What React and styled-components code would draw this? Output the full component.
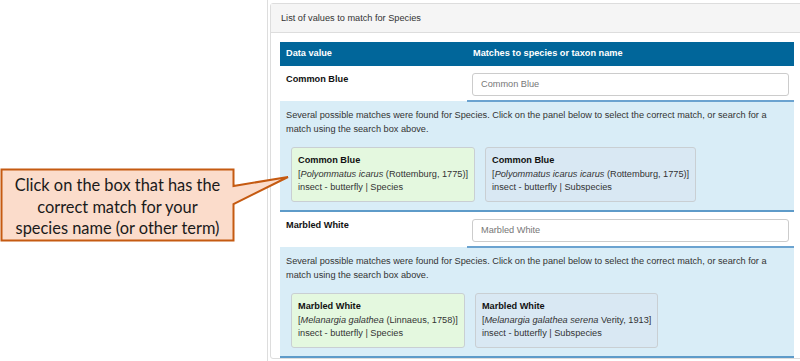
import React from 'react';
import styled, { createGlobalStyle } from 'styled-components';

const GlobalStyle = createGlobalStyle`
  html, body {
    margin: 0;
    padding: 0;
    background: #fff;
    overflow: hidden;
  }
  body {
    font-family: "Liberation Sans", Arial, sans-serif;
    font-size: 9.2px;
    line-height: 13.6px;
    color: #333;
  }
`;

const Page = styled.div`
  display: flex;
  width: 800px;
  height: 361px;
  overflow: hidden;
`;

const LeftCol = styled.div`
  width: 267px;
  flex: none;
  padding-top: 168px;
  position: relative;
  z-index: 2;
`;

const Callout = styled.div`
  position: relative;
  width: 235px;
  height: 75px;
  display: flex;
  align-items: center;
  justify-content: center;
`;

const CalloutShape = styled.svg`
  position: absolute;
  left: 0;
  top: 0;
  overflow: visible;
`;

const CalloutText = styled.div`
  position: relative;
  font-family: Lato, "Open Sans", sans-serif;
  font-size: 16.4px;
  line-height: 21.5px;
  color: #1a1a1a;
  text-align: center;
  padding-top: 2px;
  white-space: nowrap;
`;

const RightCol = styled.div`
  flex: 1;
  border-left: 1px solid #ddd;
  padding: 3px 0 0 2px;
`;

const Panel = styled.div`
  width: 533px;
  border: 1px solid #ddd;
  border-radius: 3px;
  background: #fff;
`;

const PanelHeading = styled.div`
  height: 28px;
  line-height: 28px;
  padding: 0 10px;
  background: #f5f5f5;
  border-bottom: 1px solid #ddd;
`;

const PanelBody = styled.div`
  padding: 9px 9px 0 9px;
`;

const Table = styled.table`
  width: 514px;
  border-collapse: collapse;
  table-layout: fixed;
`;

const HeadCell = styled.th`
  box-sizing: border-box;
  background: #01669a;
  color: #fff;
  font-weight: bold;
  text-align: left;
  height: 24px;
  padding: 0 6px;
  width: ${p => p.$w || 'auto'};
`;

const NameCell = styled.td`
  vertical-align: top;
  padding: 7px 6px 0;
  font-weight: bold;
  color: #111;
`;

const InputCell = styled.td`
  padding: 7px 5px 4px;
  border-bottom: 2px solid #6ba3d0;
`;

const SearchInput = styled.div`
  height: 21px;
  line-height: 21px;
  border: 1px solid #ccc;
  border-radius: 3px;
  padding: 0 8px;
  color: #777;
  background: #fff;
`;

const InfoCell = styled.td`
  background: #d9edf7;
  padding: 7px 6px 8px;
  border-bottom: 2px solid #5e9bc9;
`;

const InfoText = styled.div`
  color: #333;
`;

const Matches = styled.div`
  display: flex;
  gap: 10px;
  margin: 11px 0 0 5px;
`;

const MatchCard = styled.div`
  padding: 6px;
  border: 1px solid #c9cfd3;
  border-radius: 3px;
  background: ${p => (p.$best ? '#e4f8df' : '#d9e8f3')};
`;

const CardTitle = styled.div`
  font-weight: bold;
  color: #111;
`;

const Sci = styled.i`
  font-style: italic;
`;

const data = [
  {
    name: 'Common Blue',
    matches: [
      { best: true, sci: 'Polyommatus icarus', auth: ' (Rottemburg, 1775)]', rank: 'Species' },
      { sci: 'Polyommatus icarus icarus', auth: ' (Rottemburg, 1775)]', rank: 'Subspecies' }
    ]
  },
  {
    name: 'Marbled White',
    matches: [
      { best: true, sci: 'Melanargia galathea', auth: ' (Linnaeus, 1758)]', rank: 'Species' },
      { sci: 'Melanargia galathea serena', auth: ' Verity, 1913]', rank: 'Subspecies' }
    ]
  }
];

const App = () => (
  <>
    <GlobalStyle />
    <Page>
      <LeftCol>
        <Callout>
          <CalloutShape width="300" height="80" viewBox="0 0 300 80">
            <path
              d="M1.5 1.5 H233.5 V18 L288 9 L233.5 36 V72.5 H1.5 Z"
              fill="#fbdccb"
              stroke="#c55a11"
              strokeWidth="2"
              strokeLinejoin="miter"
            />
          </CalloutShape>
          <CalloutText>
            Click on the box that has the<br />
            correct match for your<br />
            species name (or other term)
          </CalloutText>
        </Callout>
      </LeftCol>
      <RightCol>
        <Panel>
          <PanelHeading>List of values to match for Species</PanelHeading>
          <PanelBody>
            <Table>
              <thead>
                <tr>
                  <HeadCell $w="187px">Data value</HeadCell>
                  <HeadCell>Matches to species or taxon name</HeadCell>
                </tr>
              </thead>
              <tbody>
                {data.map(row => (
                  <React.Fragment key={row.name}>
                    <tr>
                      <NameCell>{row.name}</NameCell>
                      <InputCell>
                        <SearchInput>{row.name}</SearchInput>
                      </InputCell>
                    </tr>
                    <tr>
                      <InfoCell colSpan={2}>
                        <InfoText>
                          Several possible matches were found for Species. Click on the panel below to select the correct match, or search for a match using the search box above.
                        </InfoText>
                        <Matches>
                          {row.matches.map(m => (
                            <MatchCard key={m.sci} $best={m.best}>
                              <CardTitle>{row.name}</CardTitle>
                              <div>[<Sci>{m.sci}</Sci>{m.auth}</div>
                              <div>insect - butterfly | {m.rank}</div>
                            </MatchCard>
                          ))}
                        </Matches>
                      </InfoCell>
                    </tr>
                  </React.Fragment>
                ))}
              </tbody>
            </Table>
          </PanelBody>
        </Panel>
      </RightCol>
    </Page>
  </>
);

export default App;
